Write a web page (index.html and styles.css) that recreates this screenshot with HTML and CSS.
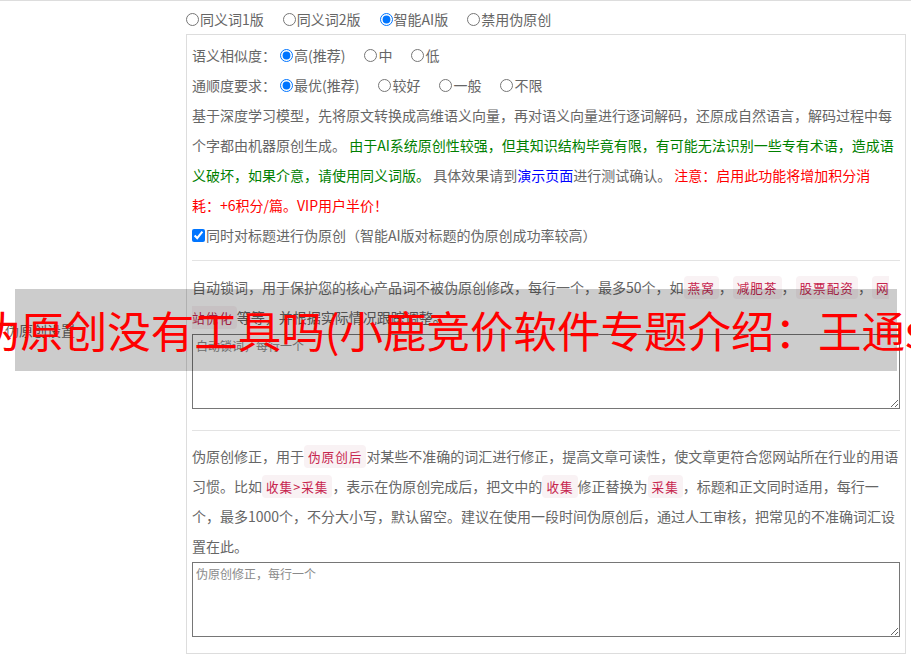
FILE: index.html
```html
<!DOCTYPE html>
<html lang="zh-CN">
<head>
<meta charset="utf-8">
<title>伪原创设置</title>
<link rel="stylesheet" href="styles.css">
</head>
<body>
<div class="page">
  <div class="side-label">伪原创设置</div>
  <div class="main">
    <div class="modes">
      <label class="choice"><input type="radio" name="mode">同义词1版</label>
      <label class="choice"><input type="radio" name="mode">同义词2版</label>
      <label class="choice"><input type="radio" name="mode" checked>智能AI版</label>
      <label class="choice"><input type="radio" name="mode">禁用伪原创</label>
    </div>
    <div class="box">
      <div class="opt">
        <span class="opt-title">语义相似度：</span>
        <label class="choice"><input type="radio" name="sim" checked>高(推荐)</label>
        <label class="choice"><input type="radio" name="sim">中</label>
        <label class="choice"><input type="radio" name="sim">低</label>
      </div>
      <div class="opt">
        <span class="opt-title">通顺度要求：</span>
        <label class="choice"><input type="radio" name="flu" checked>最优(推荐)</label>
        <label class="choice"><input type="radio" name="flu">较好</label>
        <label class="choice"><input type="radio" name="flu">一般</label>
        <label class="choice"><input type="radio" name="flu">不限</label>
      </div>
      <p class="desc narrow">基于深度学习模型，先将原文转换成高维语义向量，再对语义向量进行逐词解码，还原成自然语言，解码过程中每个字都由机器原创生成。 <span class="green">由于AI系统原创性较强，但其知识结构毕竟有限，有可能无法识别一些专有术语，造成语义破坏，如果介意，请使用同义词版。</span> 具体效果请到<a class="blue" href="#">演示页面</a>进行测试确认。 <span class="red">注意：启用此功能将增加积分消耗：+6积分/篇。VIP用户半价！</span></p>
      <div class="opt">
        <label class="choice"><input type="checkbox" checked>同时对标题进行伪原创（智能AI版对标题的伪原创成功率较高）</label>
      </div>
      <hr class="sep sep-first">
      <p class="desc">自动锁词，用于保护您的核心产品词不被伪原创修改，每行一个，最多50个，如<code>燕窝</code>，<code>减肥茶</code>，<code>股票配资</code>，<code>网站优化</code>等等，并根据实际情况跟踪调整。</p>
      <textarea class="field field-lock" placeholder="自动锁词，每行一个"></textarea>
      <hr class="sep sep-second">
      <p class="desc">伪原创修正，用于<code>伪原创后</code>对某些不准确的词汇进行修正，提高文章可读性，使文章更符合您网站所在行业的用语习惯。比如<code>收集&gt;采集</code>，表示在伪原创完成后，把文中的<code>收集</code>修正替换为<code>采集</code>，标题和正文同时适用，每行一个，最多1000个，不分大小写，默认留空。建议在使用一段时间伪原创后，通过人工审核，把常见的不准确词汇设置在此。</p>
      <textarea class="field field-fix" placeholder="伪原创修正，每行一个"></textarea>
    </div>
  </div>
  <div class="banner"><span>伪原创没有工具吗(小鹿竞价软件专题介绍：王通s</span></div>
</div>
</body>
</html>
```

FILE: styles.css
```css
html, body {
  margin: 0;
  padding: 0;
  overflow: hidden;
  background: #fff;
}

body {
  font-family: "Noto Sans CJK SC", "Microsoft YaHei", sans-serif;
  font-size: 14px;
  color: #666;
}

.page {
  position: relative;
  display: grid;
  grid-template-columns: 186px 720px;
  border-top: 1px solid #ddd;
  height: 657px;
}

.side-label {
  align-self: center;
  padding-left: 5px;
  line-height: 30px;
}

.main {
  display: flex;
  flex-direction: column;
}

.modes {
  display: flex;
  align-items: center;
  padding-top: 3px;
  height: 30px;
}

.choice {
  display: inline-flex;
  align-items: center;
  margin-right: 19px;
  white-space: nowrap;
}

.choice input {
  margin: 0 1px 0 0;
  width: 13px;
  height: 13px;
}

.box {
  border: 1px solid #ddd;
  padding: 5px 5px 16px 5px;
}

.opt {
  display: flex;
  align-items: center;
  height: 30px;
}

.opt-title {
  margin-right: 4px;
}

.desc {
  margin: 0;
  line-height: 30px;
}

.narrow {
  margin-right: 6px;
}

.green { color: #008000; }
.red { color: #ff0000; }
.blue { color: #0000ff; text-decoration: none; }

code {
  font-family: inherit;
  font-size: 90%;
  line-height: 1;
  letter-spacing: 1px;
  padding: 2px 4px;
  color: #c7254e;
  background: #f9f2f4;
  border-radius: 4px;
}

.sep {
  border: 0;
  border-top: 1px solid #e3e3e3;
}

.sep-first {
  margin: 10px 0 11px;
}

.sep-second {
  margin: 21px 0 10px;
}

.field {
  display: block;
  box-sizing: border-box;
  width: 100%;
  height: 75px;
  border: 1px solid #767676;
  padding: 2px 3px;
  font-family: "Noto Sans CJK SC", "Microsoft YaHei", sans-serif;
  font-size: 12px;
  resize: vertical;
}

.field-lock {
  margin-top: 2px;
}

.field-fix {
  margin-top: 1px;
}

.field::placeholder {
  color: #8a8a8a;
}

.banner {
  position: absolute;
  left: 15px;
  top: 288px;
  box-sizing: border-box;
  width: 882px;
  height: 82px;
  padding-right: 10px;
  background: rgba(0, 0, 0, 0.2);
  display: flex;
  align-items: center;
  justify-content: center;
  white-space: nowrap;
  font-size: 43.5px;
  color: #ff0000;
  line-height: 1;
}
```
